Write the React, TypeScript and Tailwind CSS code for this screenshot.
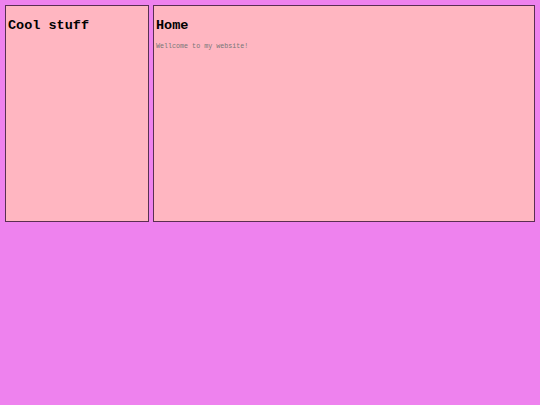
export default function App() {
  return (
    <div className="min-h-[405px] bg-[#ee82ee] p-[5px] font-['Liberation_Mono',monospace]">
      <div className="flex h-[217px] gap-[4px]">
        <aside className="w-[144px] border border-[#5a2f52] bg-[#ffb6c1] px-[2px] pt-[12px]">
          <h2 className="text-[13.5px] font-bold leading-[16px] text-black">Cool stuff</h2>
        </aside>
        <main className="flex-1 border border-[#5a2f52] bg-[#ffb6c1] px-[2px] pt-[12px]">
          <h2 className="text-[13.5px] font-bold leading-[16px] text-black">Home</h2>
          <p className="mt-[8px] text-[6.7px] leading-[8px] text-[#777]">Wellcome to my website!</p>
        </main>
      </div>
    </div>
  );
}
